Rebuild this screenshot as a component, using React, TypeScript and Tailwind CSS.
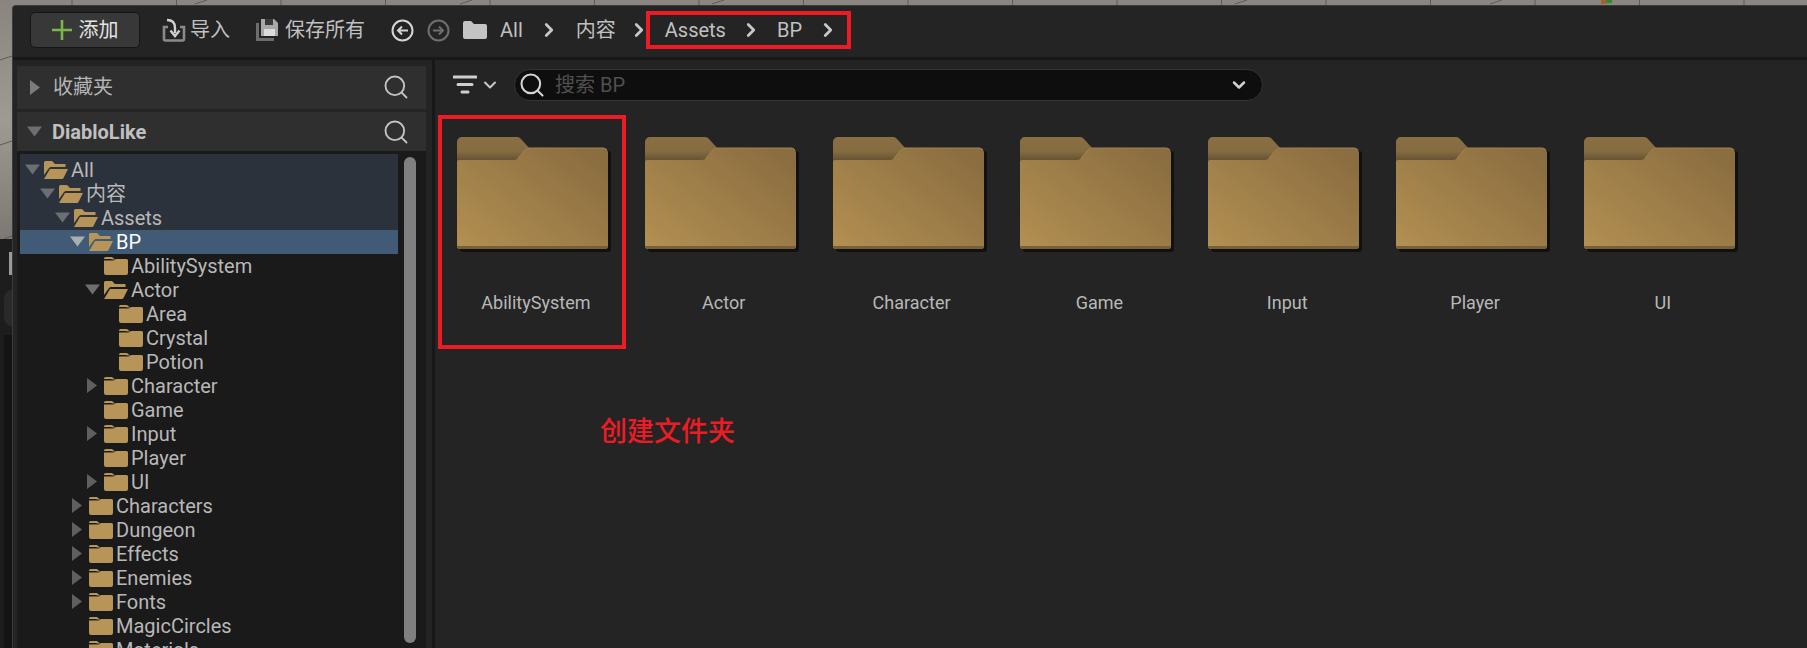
import React from 'react';
import { ChevronRight, ChevronDown, Search } from 'lucide-react';

interface TreeRow {
  name: string;
  depth: number;
  arrow?: 'open' | 'closed';
  open?: boolean;
  path?: boolean;
  selected?: boolean;
}

const treeRows: TreeRow[] = [
  { name: 'All', depth: 0, arrow: 'open', open: true, path: true },
  { name: '内容', depth: 1, arrow: 'open', open: true, path: true },
  { name: 'Assets', depth: 2, arrow: 'open', open: true, path: true },
  { name: 'BP', depth: 3, arrow: 'open', open: true, selected: true },
  { name: 'AbilitySystem', depth: 4 },
  { name: 'Actor', depth: 4, arrow: 'open', open: true },
  { name: 'Area', depth: 5 },
  { name: 'Crystal', depth: 5 },
  { name: 'Potion', depth: 5 },
  { name: 'Character', depth: 4, arrow: 'closed' },
  { name: 'Game', depth: 4 },
  { name: 'Input', depth: 4, arrow: 'closed' },
  { name: 'Player', depth: 4 },
  { name: 'UI', depth: 4, arrow: 'closed' },
  { name: 'Characters', depth: 3, arrow: 'closed' },
  { name: 'Dungeon', depth: 3, arrow: 'closed' },
  { name: 'Effects', depth: 3, arrow: 'closed' },
  { name: 'Enemies', depth: 3, arrow: 'closed' },
  { name: 'Fonts', depth: 3, arrow: 'closed' },
  { name: 'MagicCircles', depth: 3 },
  { name: 'Materials', depth: 3 },
];

const depthPadding = ['pl-[5px]', 'pl-[20px]', 'pl-[35px]', 'pl-[50px]', 'pl-[65px]', 'pl-[80px]'];

const assetFolders = ['AbilitySystem', 'Actor', 'Character', 'Game', 'Input', 'Player', 'UI'];

// floor grid of the level viewport behind the panel
const gridLines = Array.from({ length: 17 }, (_, i) => 72 + i * 104.5);

const TriangleDown = ({ light }: { light?: boolean }) => (
  <svg width="15" height="11" viewBox="0 0 15 11" className="shrink-0">
    <path d="M0 0.5h15L7.5 10.5z" fill={light ? '#a9aeb4' : '#6b6e72'} />
  </svg>
);

const TriangleRight = ({ color = '#5f5f5f' }: { color?: string }) => (
  <svg width="10" height="15" viewBox="0 0 10 15" className="shrink-0">
    <path d="M0 0l10 7.5L0 15z" fill={color} />
  </svg>
);

const ClosedFolder = () => (
  <svg width="24" height="18" viewBox="0 0 24 18" className="shrink-0">
    <path d="M0 1.5A1.5 1.5 0 0 1 1.5 0H8l3 2.5H8.5L6.5 2H0z" fill="#b79558" />
    <path d="M0 3.5h9.5l2.5-1.5h10.5A1.5 1.5 0 0 1 24 3.5V16a2 2 0 0 1-2 2H2a2 2 0 0 1-2-2z" fill="#b79558" />
  </svg>
);

const OpenFolder = () => (
  <svg width="24" height="18" viewBox="0 0 24 18" className="shrink-0">
    <path d="M0 14V1.5A1.5 1.5 0 0 1 1.5 0H8l3 3h10.5V6H6.5L5 7z" fill="#b79558" />
    <path d="M6 8h18l-4.5 9a2 2 0 0 1-1.5 1H0z" fill="#b79558" />
  </svg>
);

const BigFolder = ({ id }: { id: string }) => (
  <svg width="156" height="118" viewBox="0 0 156 118" className="ml-[15px] block">
    <defs>
      <linearGradient id={`body-${id}`} x1="0" y1="1" x2="1" y2="0.15">
        <stop offset="0" stopColor="#b39052" />
        <stop offset="1" stopColor="#8a6d40" />
      </linearGradient>
      <linearGradient id={`tab-${id}`} x1="0" y1="0" x2="0" y2="1">
        <stop offset="0" stopColor="#8a6f43" />
        <stop offset="0.55" stopColor="#856b40" />
        <stop offset="1" stopColor="#5d4b2e" />
      </linearGradient>
    </defs>
    <rect x="3" y="14" width="151" height="101" rx="3" fill="#111111" />
    <path d="M0 24V5a5 5 0 0 1 5-5h55a5 5 0 0 1 4 2l9 10v14H0z" fill={`url(#tab-${id})`} />
    <path
      d="M0 25a2 2 0 0 1 2-2h55c2 0 3-1 4-2l7-8c1-1 2-2 4-2h74a5 5 0 0 1 5 5v93a3 3 0 0 1-3 3H3a3 3 0 0 1-3-3z"
      fill={`url(#body-${id})`}
    />
    <path d="M0 109h151a3 3 0 0 1-3 3H3a3 3 0 0 1-3-3z" fill="#76603a" />
    <path d="M61 21l7-8c1-1 2-2 4-2h74a5 5 0 0 1 4 2" fill="none" stroke="#a0834f" strokeWidth="1" />
  </svg>
);

const SectionSearch = () => <Search size={28} strokeWidth={1.6} className="text-[#c4c4c4]" />;

const Crumb = () => <ChevronRight size={22} strokeWidth={3} className="text-[#c8c8c8]" />;

export default function App() {
  return (
    <div className="relative h-[648px] w-[1807px] overflow-hidden bg-[#8c8682] pl-[12px] pt-[5px] font-['Roboto','Noto_Sans_CJK_SC',sans-serif]">
      {/* editor viewport peeking out on the top and left */}
      <svg width="1807" height="5" viewBox="0 0 1807 5" className="absolute left-0 top-0">
        {gridLines.map((x) => (
          <path key={x} d={`M${x} 0v5`} stroke="#5e5a57" strokeWidth="1" />
        ))}
        <path d="M195 4l12-4M460 4l12-4M712 4l12-4M1235 4l12-4M1490 4l12-4" stroke="#5e5a57" strokeWidth="1" />
        <rect x="1601" y="0" width="5" height="4" fill="#a8602c" />
        <rect x="1606" y="0" width="6" height="3" fill="#2f8a2f" />
      </svg>
      <div className="absolute left-0 top-0 h-[239px] w-[12px] bg-linear-to-b from-[#8a8480] via-[#a09a94] to-[#7e7874]">
        <svg width="12" height="239" viewBox="0 0 12 239">
          <path d="M0 60l12-4M0 145l12-4M4 239l8-3" stroke="#5e5a57" strokeWidth="1" />
        </svg>
      </div>
      <div className="absolute left-0 top-[239px] h-[409px] w-[12px] overflow-hidden bg-[#1d1d1d]">
        <div className="absolute right-0 top-[13px] h-[23px] w-[3px] bg-[#9a9a9a]" />
        <div className="absolute left-[4px] top-[50px] h-[38px] w-[20px] rounded-full bg-[#2a2a2a]" />
        <div className="absolute left-[4px] top-[96px] h-[313px] w-[8px] bg-[#141414]" />
      </div>

      <div className="flex h-[643px] flex-col rounded-tl-[4px] border-l border-t border-[#3c3c3c] bg-[#242424]">
        {/* toolbar */}
        <div className="flex h-[54px] shrink-0 items-center border-b-[3px] border-[#181818] pb-[3px] pl-[17px] text-[20px] text-[#c0c0c0]">
          <button className="flex h-[36px] w-[110px] items-center justify-center gap-[7px] rounded-[5px] border border-[#151515] bg-[#383838] text-[#e4e4e4]">
            <svg width="20" height="20" viewBox="0 0 20 20">
              <path d="M10 0v20M0 10h20" stroke="#7ab648" strokeWidth="2.6" />
            </svg>
            添加
          </button>
          <svg width="24" height="24" viewBox="0 0 24 24" className="ml-[22px]">
            <path d="M6 9H2v12a1.5 1.5 0 0 0 1.5 1.5h17A1.5 1.5 0 0 0 22 21V9h-4" fill="none" stroke="#8a8a8a" strokeWidth="2.6" />
            <path d="M5 2c5 0 8 2.5 8 8v5" fill="none" stroke="#d0d0d0" strokeWidth="2.4" />
            <path d="M8.5 12.5L13 18l4.5-5.5" fill="none" stroke="#d0d0d0" strokeWidth="2.4" />
          </svg>
          <span className="ml-[4px]">导入</span>
          <svg width="22" height="22" viewBox="0 0 22 22" className="ml-[26px]">
            <path d="M0 4h3v15h15v3H0z" fill="#6d6d6d" />
            <path d="M5 0h13l4 4v13H5z" fill="#a8a8a8" />
            <path d="M9 0h8v6H9z" fill="#3a3a3a" />
            <path d="M8 10h11v7H8z" fill="#dcdcdc" />
          </svg>
          <span className="ml-[7px]">保存所有</span>
          <svg width="23" height="23" viewBox="0 0 23 23" className="ml-[26px]">
            <circle cx="11.5" cy="11.5" r="10" fill="none" stroke="#d4d4d4" strokeWidth="2" />
            <path d="M17 11.5H7M11 7.5l-4 4 4 4" fill="none" stroke="#d4d4d4" strokeWidth="2" />
          </svg>
          <svg width="23" height="23" viewBox="0 0 23 23" className="ml-[13px]">
            <circle cx="11.5" cy="11.5" r="10" fill="none" stroke="#6e6e6e" strokeWidth="2" />
            <path d="M6 11.5h10M12 7.5l4 4-4 4" fill="none" stroke="#6e6e6e" strokeWidth="2" />
          </svg>
          <svg width="24" height="18" viewBox="0 0 24 18" className="ml-[13px]">
            <path d="M0 2a2 2 0 0 1 2-2h6l3 3h11a2 2 0 0 1 2 2v11a2 2 0 0 1-2 2H2a2 2 0 0 1-2-2z" fill="#c4c4c4" />
          </svg>
          <span className="ml-[13px]">All</span>
          <span className="ml-[15px] flex"><Crumb /></span>
          <span className="ml-[16px]">内容</span>
          <span className="ml-[12px] flex"><Crumb /></span>
          <span className="ml-[15px]">Assets</span>
          <span className="ml-[14px] flex"><Crumb /></span>
          <span className="ml-[15px]">BP</span>
          <span className="ml-[15px] flex"><Crumb /></span>
        </div>

        <div className="flex min-h-0 flex-1">
          {/* sources panel */}
          <div className="flex w-[413px] shrink-0 flex-col overflow-hidden pl-[4px] pt-[6px]">
            <div className="flex h-[43px] shrink-0 items-center justify-between bg-[#2f2f2f] pb-[1px] pl-[13px] pr-[16px] text-[20px] text-[#b4b4b4]">
              <div className="flex items-center gap-[13px]">
                <TriangleRight color="#7c7c7c" />
                收藏夹
              </div>
              <SectionSearch />
            </div>
            <div className="mt-[3px] flex h-[39px] shrink-0 items-center justify-between bg-[#2f2f2f] pl-[10px] pr-[16px] text-[20px] font-bold text-[#c0c0c0]">
              <div className="flex items-center gap-[10px]">
                <TriangleDown />
                DiabloLike
              </div>
              <SectionSearch />
            </div>
            <div className="flex min-h-0 flex-1 bg-[#1a1a1a] pt-[3px]">
              <div className="w-[381px] shrink-0 pl-[3px]">
                <div className="h-[4px] bg-[#2b323c]" />
                {treeRows.map((row) => (
                  <TreeItem key={row.name} row={row} />
                ))}
              </div>
              <div className="ml-[6px] mt-[3px] h-[486px] w-[12px] rounded-full bg-[#808080]" />
            </div>
          </div>

          <div className="ml-[6px] w-[3px] shrink-0 bg-[#181818]" />

          {/* asset view */}
          <div className="min-w-0 flex-1">
            <div className="flex h-[50px] items-center pl-[18px]">
              <svg width="24" height="20" viewBox="0 0 24 20">
                <path d="M1 2h22M5 9.5h14M9 17h6" stroke="#d0d0d0" strokeWidth="3" strokeLinecap="round" />
              </svg>
              <ChevronDown size={20} strokeWidth={2.4} className="ml-[3px] text-[#c8c8c8]" />
              <div className="ml-[14px] flex h-[32px] w-[749px] items-center rounded-full border border-[#333333] bg-[#0e0e0e] pl-[3px] pr-[13px]">
                <Search size={28} strokeWidth={1.8} className="text-[#d4d4d4]" />
                <span className="ml-[9px] flex-1 text-[20px] text-[#505050]">搜索 BP</span>
                <ChevronDown size={20} strokeWidth={3} className="text-[#d0d0d0]" />
              </div>
            </div>
            <div className="grid grid-cols-[repeat(7,187.83px)] pl-[7px] pt-[27px]">
              {assetFolders.map((name) => (
                <div key={name}>
                  <BigFolder id={name} />
                  <p className="mt-[36px] text-center text-[18px] leading-[24px] text-[#b8b8b8]">{name}</p>
                </div>
              ))}
            </div>
            <p className="ml-[165px] mt-[99px] text-[27px] font-medium leading-[36px] text-[#ed1c24]">创建文件夹</p>
          </div>
        </div>
      </div>

      {/* annotation boxes drawn over the shot */}
      <div className="pointer-events-none absolute left-[438px] top-[115px] h-[234px] w-[188px] border-[4px] border-[#ed1c24]" />
      <div className="pointer-events-none absolute left-[646px] top-[11px] h-[38px] w-[205px] border-[4px] border-[#ed1c24]" />
    </div>
  );
}

function TreeItem({ row }: { row: TreeRow }) {
  const bg = row.selected ? 'bg-[#415a75]' : row.path ? 'bg-[#2b323c]' : '';
  const text = row.selected ? 'text-white' : 'text-[#b8b8b8]';
  return (
    <div className={`flex h-[24px] items-center pb-[1px] text-[20px] ${bg} ${text} ${depthPadding[row.depth]}`}>
      <span className="flex w-[19px] shrink-0 items-center">
        {row.arrow === 'open' && <TriangleDown light={row.selected} />}
        {row.arrow === 'closed' && <span className="ml-[2px] flex"><TriangleRight /></span>}
      </span>
      {row.open ? <OpenFolder /> : <ClosedFolder />}
      <span className="ml-[3px] whitespace-nowrap">{row.name}</span>
    </div>
  );
}
